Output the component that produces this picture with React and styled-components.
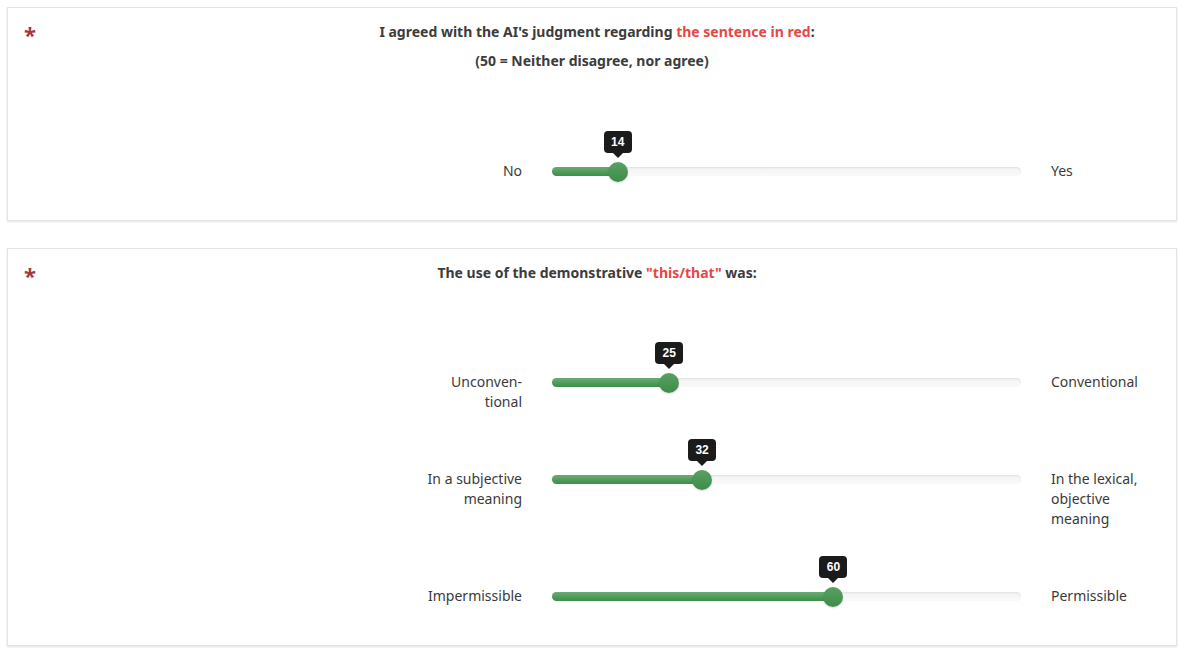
import React from "react";
import styled, { createGlobalStyle } from "styled-components";

const Global = createGlobalStyle`
  html, body { margin: 0; padding: 0; background: #fff; }
  body { font-family: "Noto Sans", "Open Sans", sans-serif; color: #333; font-size: 14px; }
`;

const Page = styled.div`
  padding: 7px 8px 8px 7px;
  display: flex;
  flex-direction: column;
  gap: 27px;
`;

const Card = styled.section`
  position: relative;
  border: 1px solid #e4e4e4;
  box-shadow: 0 1px 2px rgba(0, 0, 0, 0.12);
  padding: 14px 13px 39px 13px;
  background: #fff;
`;

const Required = styled.span`
  position: absolute;
  left: 16px;
  top: 15px;
  color: #a3393f;
  font-weight: 700;
  font-size: 22px;
  line-height: 22px;
`;

const Header = styled.div`
  display: flex;
  flex-direction: column;
  align-items: center;
  gap: 9px;
  margin-bottom: ${(p) => p.$space}px;
`;

const Title = styled.div`
  font-weight: 700;
  font-size: 14px;
  line-height: 20px;
  color: #3c3c3c;
  text-align: center;
  padding-left: ${(p) => (p.$main ? 10 : 0)}px;
`;

const Highlight = styled.span`
  color: #e64747;
`;

const Rows = styled.div`
  display: flex;
  flex-direction: column;
  gap: 57px;
`;

const Row = styled.div`
  display: grid;
  grid-template-columns: 96px 469px 96px;
  column-gap: 30px;
  margin-left: 405px;
  align-items: start;
`;

const Label = styled.div`
  font-size: 14px;
  line-height: 20px;
  color: #3a3a3a;
  text-align: ${(p) => (p.$align === "right" ? "right" : "left")};
`;

const Track = styled.div`
  position: relative;
  height: 9px;
  margin-top: 6px;
  border-radius: 5px;
  background: linear-gradient(#f3f3f3, #fafafa);
  box-shadow: inset 0 1px 2px rgba(0, 0, 0, 0.08);
`;

const Fill = styled.div`
  height: 100%;
  border-radius: 5px;
  background: linear-gradient(#6bab74, #3c8e47);
`;

const Thumb = styled.div`
  position: absolute;
  top: 50%;
  width: 20px;
  height: 20px;
  margin-left: -10px;
  margin-top: -10px;
  border-radius: 50%;
  background: linear-gradient(#58a063, #3e8d49);
  box-shadow: 0 1px 2px rgba(0, 0, 0, 0.15);
`;

const Tip = styled.div`
  position: absolute;
  bottom: 29px;
  left: 50%;
  transform: translateX(-50%);
  min-width: 14px;
  padding: 3px 7px;
  background: #1b1b1b;
  color: #fff;
  border-radius: 4px;
  font-family: "Liberation Sans", Arial, sans-serif;
  font-weight: 700;
  font-size: 12px;
  line-height: 16px;
  text-align: center;
  &::after {
    content: "";
    position: absolute;
    left: 50%;
    bottom: -5px;
    margin-left: -5px;
    border-left: 5px solid transparent;
    border-right: 5px solid transparent;
    border-top: 5px solid #1b1b1b;
  }
`;

function Slider({ left, right, value }) {
  return (
    <Row>
      <Label $align="right">{left}</Label>
      <Track>
        <Fill style={{ width: `${value}%` }} />
        <Thumb style={{ left: `${value}%` }}>
          <Tip>{value}</Tip>
        </Thumb>
      </Track>
      <Label>{right}</Label>
    </Row>
  );
}

export default function App() {
  return (
    <>
      <Global />
      <Page>
        <Card>
          <Required>*</Required>
          <Header $space={90}>
            <Title $main>
              I agreed with the AI's judgment regarding <Highlight>the sentence in red</Highlight>:
            </Title>
            <Title>(50 = Neither disagree, nor agree)</Title>
          </Header>
          <Rows>
            <Slider left="No" right="Yes" value={14} />
          </Rows>
        </Card>
        <Card>
          <Required>*</Required>
          <Header $space={89}>
            <Title $main>
              The use of the demonstrative <Highlight>"this/that"</Highlight> was:
            </Title>
          </Header>
          <Rows>
            <Slider left={<>Unconven-<br />tional</>} right="Conventional" value={25} />
            <Slider left="In a subjective meaning" right="In the lexical, objective meaning" value={32} />
            <Slider left="Impermissible" right="Permissible" value={60} />
          </Rows>
        </Card>
      </Page>
    </>
  );
}
